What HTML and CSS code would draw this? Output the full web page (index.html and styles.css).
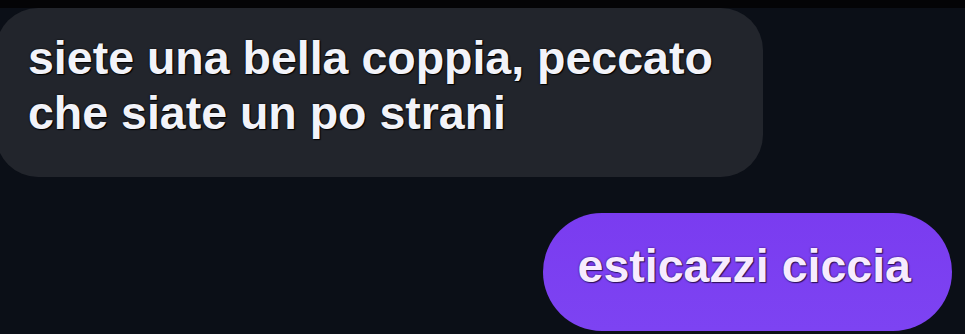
FILE: index.html
```html
<!DOCTYPE html>
<html lang="it">
<head>
    <meta charset="UTF-8">
    <meta name="viewport" content="width=device-width, initial-scale=1.0">
    <title>Chat</title>
    <link rel="stylesheet" href="styles.css">
</head>
<body>
    <div class="top-strip"></div>

    <div class="chat">
        <div class="row row-in">
            <div class="bubble bubble-in">siete una bella coppia, peccato<br>che siate un po strani</div>
        </div>
        <div class="row row-out">
            <div class="bubble bubble-out">esticazzi ciccia</div>
        </div>
    </div>
</body>
</html>
```

FILE: styles.css
```css
/* Dark chat screenshot */
body {
    margin: 0;
    background-color: #0b0f17;
    font-family: 'Liberation Sans', Arial, sans-serif;
    overflow: hidden;
}

.top-strip {
    height: 8px;
    background-color: #040406;
}

.chat {
    display: flex;
    flex-direction: column;
    gap: 36px;
}

.row {
    display: flex;
}

.row-in {
    justify-content: flex-start;
}

.row-out {
    justify-content: flex-end;
    padding-right: 13px;
}

/* Bubbles */
.bubble {
    font-size: 46.5px;
    font-weight: bold;
    line-height: 55px;
    white-space: nowrap;
}

.bubble-in {
    margin-left: -4px;
    padding: 23px 50px 36px 32px;
    background-color: #22252c;
    border-radius: 42px;
    color: #f2f3f9;
    text-shadow: 0 0 2px #000, 1px 1px 1px #000;
}

.bubble-out {
    padding: 26px 41px 37px 35px;
    background: linear-gradient(to bottom, #7a3cf0, #7d43f2);
    border-radius: 59px;
    color: #f7ebff;
    text-shadow: 0 0 2px #2e1259, 1px 1px 1px #2e1259;
}
```
